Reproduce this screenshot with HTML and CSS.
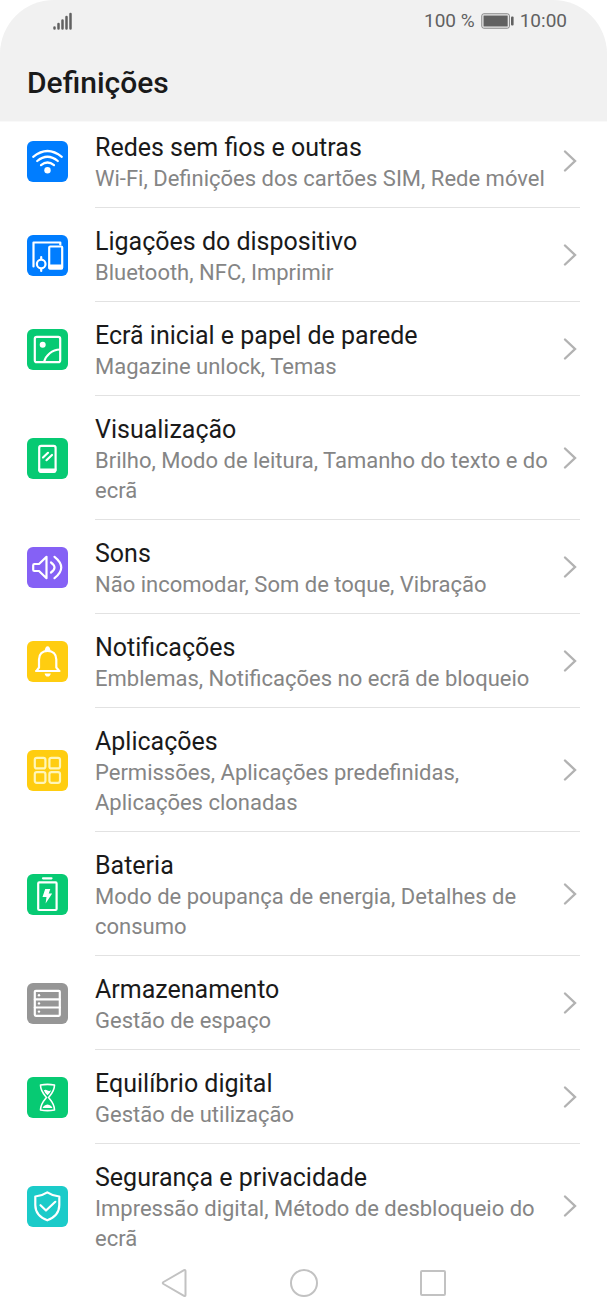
FILE: index.html
```html
<!DOCTYPE html>
<html lang="pt">

<head>
    <meta charset="UTF-8">
    <meta name="viewport" content="width=device-width, initial-scale=1.0">
    <title>Definições</title>
    <link rel="stylesheet" href="styles.css">
</head>

<body>
    <svg class="sprite" aria-hidden="true">
        <symbol id="chevron" viewBox="0 0 14 24">
            <path d="M2 2.5L12 12L2 21.5" />
        </symbol>
    </svg>

    <div class="screen">
        <header class="header">
            <div class="status-bar">
                <svg class="signal" width="20" height="18" viewBox="0 0 20 18">
                    <path d="M1.5 15.5V16.5M5.5 12V16.5M9.5 8.5V16.5M13.5 5V16.5M17.5 2V16.5" />
                </svg>
                <div class="status-right">
                    <span>100 %</span>
                    <svg class="battery" width="33" height="16" viewBox="0 0 33 16">
                        <rect class="shell" x="0.8" y="0.8" width="27.6" height="14.4" rx="2" />
                        <rect x="2.5" y="2.5" width="24.2" height="11" />
                        <rect x="30" y="3.5" width="2.6" height="9" rx="1" />
                    </svg>
                    <span>10:00</span>
                </div>
            </div>
            <h1>Definições</h1>
        </header>

        <main class="list">
            <a class="row" href="#">
                <svg class="icon blue" viewBox="0 0 41 41">
                    <path d="M6.2 15.8Q20.5 4.2 34.8 15.8M10.2 20Q20.5 11.5 30.8 20M14 24.2Q20.5 18.8 27 24.2" />
                    <circle class="fill" cx="20.5" cy="29.3" r="3.2" />
                </svg>
                <div class="content">
                    <div class="text">
                        <h2>Redes sem fios e outras</h2>
                        <p>Wi-Fi, Definições dos cartões SIM, Rede móvel</p>
                    </div>
                    <svg class="chevron"><use href="#chevron" /></svg>
                </div>
            </a>

            <a class="row" href="#">
                <svg class="icon blue" viewBox="0 0 41 41">
                    <path d="M6.5 31.5V7.5H33.3V9.5" />
                    <rect x="22.2" y="11.5" width="13" height="22" rx="1" />
                    <path class="fill" d="M21.5 29.5H36V33.5Q36 34.5 35 34.5H22.5Q21.5 34.5 21.5 33.5Z" />
                    <circle cx="14.2" cy="29" r="4.3" />
                    <path d="M14.2 22V24M14.2 34V36" />
                </svg>
                <div class="content">
                    <div class="text">
                        <h2>Ligações do dispositivo</h2>
                        <p>Bluetooth, NFC, Imprimir</p>
                    </div>
                    <svg class="chevron"><use href="#chevron" /></svg>
                </div>
            </a>

            <a class="row" href="#">
                <svg class="icon green" viewBox="0 0 41 41">
                    <rect x="7.8" y="7.8" width="25.4" height="25.4" rx="2" />
                    <circle class="fill" cx="15.7" cy="15.7" r="3" />
                    <path d="M17 33C19 26 25 20.8 33 20.5" />
                </svg>
                <div class="content">
                    <div class="text">
                        <h2>Ecrã inicial e papel de parede</h2>
                        <p>Magazine unlock, Temas</p>
                    </div>
                    <svg class="chevron"><use href="#chevron" /></svg>
                </div>
            </a>

            <a class="row" href="#">
                <svg class="icon green" viewBox="0 0 41 41">
                    <rect x="12.2" y="7.8" width="16.4" height="26" rx="2" />
                    <path class="fill" d="M11.5 30.5H29.3V32.5Q29.3 34.8 27 34.8H14Q11.5 34.8 11.5 32.5Z" />
                    <path d="M16 19.5L21 14.8M19.5 22.2L25 17" />
                </svg>
                <div class="content">
                    <div class="text">
                        <h2>Visualização</h2>
                        <p>Brilho, Modo de leitura, Tamanho do texto e do ecrã</p>
                    </div>
                    <svg class="chevron"><use href="#chevron" /></svg>
                </div>
            </a>

            <a class="row" href="#">
                <svg class="icon purple" viewBox="0 0 41 41">
                    <path d="M7.5 17H12L19.5 9.8V31.2L12 24H7.5Q6.2 24 6.2 22.7V18.3Q6.2 17 7.5 17Z" />
                    <path d="M24 15.5Q31 20.5 24 25.5M27.5 9.8Q41 20.5 27.5 31.2" />
                </svg>
                <div class="content">
                    <div class="text">
                        <h2>Sons</h2>
                        <p>Não incomodar, Som de toque, Vibração</p>
                    </div>
                    <svg class="chevron"><use href="#chevron" /></svg>
                </div>
            </a>

            <a class="row" href="#">
                <svg class="icon yellow" viewBox="0 0 41 41">
                    <path d="M9 30H32.5M9.5 29.8L12 26.5V18.5C12 13 15.5 9.8 20.6 9.8S29.3 13 29.3 18.5V26.5L32 29.8" />
                    <path class="fill" d="M17.6 10Q18.2 5.2 20.6 5.2T23.6 10ZM17.6 32.5H23.8Q23.2 35.6 20.7 35.6T17.6 32.5Z" />
                </svg>
                <div class="content">
                    <div class="text">
                        <h2>Notificações</h2>
                        <p>Emblemas, Notificações no ecrã de bloqueio</p>
                    </div>
                    <svg class="chevron"><use href="#chevron" /></svg>
                </div>
            </a>

            <a class="row" href="#">
                <svg class="icon yellow cream" viewBox="0 0 41 41">
                    <rect x="7.8" y="7.8" width="10.6" height="10.6" rx="2" />
                    <rect x="22.4" y="7.8" width="10.6" height="10.6" rx="2" />
                    <rect x="7.8" y="22.2" width="10.6" height="10.6" rx="2" />
                    <rect x="22.4" y="22.2" width="10.6" height="10.6" rx="2" />
                </svg>
                <div class="content">
                    <div class="text">
                        <h2>Aplicações</h2>
                        <p>Permissões, Aplicações predefinidas, Aplicações clonadas</p>
                    </div>
                    <svg class="chevron"><use href="#chevron" /></svg>
                </div>
            </a>

            <a class="row" href="#">
                <svg class="icon green" viewBox="0 0 41 41">
                    <path d="M16 4.3H24.5" />
                    <rect x="11.2" y="8.4" width="18.4" height="27.6" rx="1" />
                    <path class="fill" d="M18.2 15H23.3L21.7 19.5H25.2L18.6 29.5L19.5 23H15.5Z" />
                </svg>
                <div class="content">
                    <div class="text">
                        <h2>Bateria</h2>
                        <p>Modo de poupança de energia, Detalhes de consumo</p>
                    </div>
                    <svg class="chevron"><use href="#chevron" /></svg>
                </div>
            </a>

            <a class="row" href="#">
                <svg class="icon grey" viewBox="0 0 41 41">
                    <rect x="7.8" y="7.8" width="25" height="25" rx="1" />
                    <path d="M7.8 16.3H32.8M7.8 24.5H32.8" />
                    <circle class="fill" cx="12" cy="12.2" r="1.2" />
                    <circle class="fill" cx="12" cy="20.4" r="1.2" />
                    <circle class="fill" cx="12" cy="28.6" r="1.2" />
                </svg>
                <div class="content">
                    <div class="text">
                        <h2>Armazenamento</h2>
                        <p>Gestão de espaço</p>
                    </div>
                    <svg class="chevron"><use href="#chevron" /></svg>
                </div>
            </a>

            <a class="row" href="#">
                <svg class="icon green thin" viewBox="0 0 41 41">
                    <path d="M13.5 8Q20.5 6.8 27.5 8C27.5 14 24.5 17 21.5 20.5C24.5 24 27.5 27 27.5 33Q20.5 34.2 13.5 33C13.5 27 16.5 24 19.5 20.5C16.5 17 13.5 14 13.5 8Z" />
                    <path class="fill" d="M16.8 13.2Q18.8 12.4 20.5 13.5T24.2 13.2Q23 16.3 20.5 18.3Q18 16.3 16.8 13.2ZM15.6 31Q16.5 28.5 20.5 27.6Q24.5 28.5 25.4 31Z" />
                </svg>
                <div class="content">
                    <div class="text">
                        <h2>Equilíbrio digital</h2>
                        <p>Gestão de utilização</p>
                    </div>
                    <svg class="chevron"><use href="#chevron" /></svg>
                </div>
            </a>

            <a class="row" href="#">
                <svg class="icon teal" viewBox="0 0 41 41">
                    <path d="M20.3 6.3Q25.5 9.8 32.3 10.5V19C32.3 27 27.5 31.5 20.3 34.3C13 31.5 8.3 27 8.3 19V10.5Q15 9.8 20.3 6.3Z" />
                    <path d="M13.5 19.2L19 24.5L28.3 15.8" />
                </svg>
                <div class="content">
                    <div class="text">
                        <h2>Segurança e privacidade</h2>
                        <p>Impressão digital, Método de desbloqueio do ecrã</p>
                    </div>
                    <svg class="chevron"><use href="#chevron" /></svg>
                </div>
            </a>
        </main>

        <nav class="nav-bar">
            <button type="button" aria-label="Voltar">
                <svg viewBox="0 0 30 30"><path d="M25.5 3V27Q25.5 28.5 24 27.8L3.500 16Q2 15 3.500 14L24 2.200Q25.5 1.500 25.5 3Z" /></svg>
            </button>
            <button type="button" aria-label="Início">
                <svg viewBox="0 0 30 30"><circle cx="15" cy="15" r="13" /></svg>
            </button>
            <button type="button" aria-label="Recentes">
                <svg viewBox="0 0 30 30"><rect x="3" y="3" width="24" height="24" rx="1" /></svg>
            </button>
        </nav>
    </div>
</body>

</html>
```

FILE: styles.css
```css
* {
    box-sizing: border-box;
}

body {
    margin: 0;
    background: #fff;
    font-family: Roboto, "Liberation Sans", sans-serif;
}

h1,
h2,
p {
    margin: 0;
}

.sprite {
    display: none;
}

.screen {
    display: flex;
    flex-direction: column;
    height: 100vh;
}

/* header */
.header {
    position: relative;
    z-index: 1;
    flex: none;
    padding-bottom: 18px;
    background: #f1f1f1;
    border-radius: 54px 54px 0 0;
    box-shadow: 0 1px 0 #f9f9f9;
}

.status-bar {
    display: flex;
    align-items: center;
    justify-content: space-between;
    height: 41px;
    padding: 0 40px 0 53px;
    font-size: 19px;
    color: #616161;
}

.status-right {
    display: flex;
    align-items: center;
    gap: 6px;
}

.signal {
    fill: none;
    stroke: #616161;
    stroke-width: 2.5;
    stroke-linecap: round;
}

.battery {
    fill: #616161;
}

.battery .shell {
    fill: none;
    stroke: #808080;
}

.header h1 {
    padding: 22px 27px 0;
    font-size: 30px;
    line-height: 40px;
    font-weight: 500;
    color: #1a1a1a;
}

/* settings list, scrolled slightly under the header */
.list {
    flex: 1;
    min-height: 0;
    margin-top: -7px;
    overflow-y: auto;
    scrollbar-width: none;
}

.row {
    display: flex;
    align-items: center;
    gap: 27px;
    padding: 0 27px;
    color: inherit;
    text-decoration: none;
}

.content {
    flex: 1;
    display: flex;
    align-items: center;
    gap: 10px;
    padding-right: 3px;
    border-bottom: 1px solid #e2e2e2;
}

.row:last-child .content {
    border-bottom-color: transparent;
}

.text {
    flex: 1;
    padding: 18px 0 13px;
}

.text h2 {
    font-size: 25px;
    line-height: 32px;
    font-weight: 400;
    color: #1a1a1a;
}

.text p {
    font-size: 22px;
    line-height: 30px;
    color: #858585;
}

.chevron {
    flex: none;
    width: 14px;
    height: 24px;
    fill: none;
    stroke: #b2b2b2;
    stroke-width: 2.4;
    stroke-linecap: round;
}

/* icons */
.icon {
    flex: none;
    width: 41px;
    height: 41px;
    border-radius: 6px;
    fill: none;
    stroke: #fff;
    stroke-width: 2.2;
    stroke-linecap: round;
    stroke-linejoin: round;
}

.icon .fill {
    fill: #fff;
    stroke: none;
}

.blue {
    background: #007dff;
}

.green {
    background: #07ca73;
}

.purple {
    background: #8561f5;
}

.yellow {
    background: #ffcd10;
}

.cream {
    stroke: #fff6b8;
}

.grey {
    background: #969696;
}

.thin {
    stroke-width: 1.6;
}

.teal {
    background: #1bcbc9;
}

/* navigation bar */
.nav-bar {
    display: flex;
    flex: none;
    align-items: center;
    justify-content: center;
    gap: 99px;
    height: 66px;
    background: #fff;
}

.nav-bar button {
    padding: 0;
    border: 0;
    background: none;
}

.nav-bar svg {
    display: block;
    width: 30px;
    height: 30px;
    fill: none;
    stroke: #c2c2c2;
    stroke-width: 2;
    stroke-linejoin: round;
}
```
